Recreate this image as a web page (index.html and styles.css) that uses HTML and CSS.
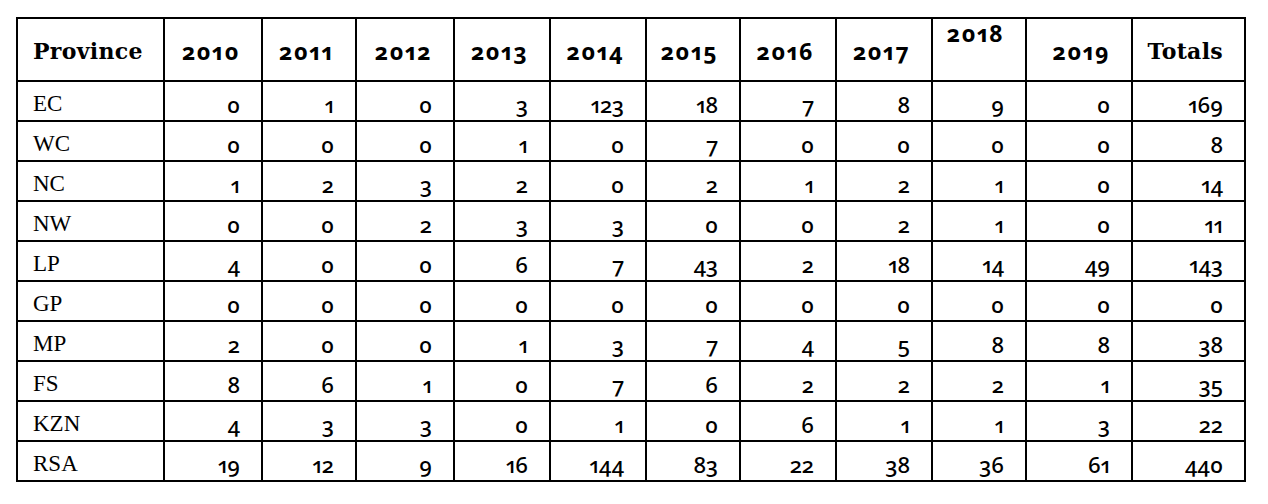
FILE: index.html
```html
<!DOCTYPE html>
<html lang="en">
<head>
    <meta charset="UTF-8">
    <title>Cases per Province 2010-2019</title>
    <link rel="stylesheet" href="styles.css">
</head>
<body>
    <table class="stats-table">
        <colgroup>
            <col class="col-province">
            <col class="col-year-a">
            <col class="col-year-b">
            <col class="col-year-a">
            <col class="col-year-c">
            <col class="col-year-c">
            <col class="col-year-b">
            <col class="col-year-c">
            <col class="col-year-c">
            <col class="col-year-b">
            <col class="col-year-d">
            <col class="col-totals">
        </colgroup>
        <thead>
            <tr>
                <th class="label-head">Province</th>
                <th>2010</th>
                <th>2011</th>
                <th>2012</th>
                <th>2013</th>
                <th>2014</th>
                <th>2015</th>
                <th>2016</th>
                <th>2017</th>
                <th class="raised">2018</th>
                <th>2019</th>
                <th class="label-head">Totals</th>
            </tr>
        </thead>
        <tbody>
            <tr><td class="province">EC</td><td>0</td><td>1</td><td>0</td><td>3</td><td>123</td><td>18</td><td>7</td><td>8</td><td>9</td><td>0</td><td>169</td></tr>
            <tr><td class="province">WC</td><td>0</td><td>0</td><td>0</td><td>1</td><td>0</td><td>7</td><td>0</td><td>0</td><td>0</td><td>0</td><td>8</td></tr>
            <tr><td class="province">NC</td><td>1</td><td>2</td><td>3</td><td>2</td><td>0</td><td>2</td><td>1</td><td>2</td><td>1</td><td>0</td><td>14</td></tr>
            <tr><td class="province">NW</td><td>0</td><td>0</td><td>2</td><td>3</td><td>3</td><td>0</td><td>0</td><td>2</td><td>1</td><td>0</td><td>11</td></tr>
            <tr><td class="province">LP</td><td>4</td><td>0</td><td>0</td><td>6</td><td>7</td><td>43</td><td>2</td><td>18</td><td>14</td><td>49</td><td>143</td></tr>
            <tr><td class="province">GP</td><td>0</td><td>0</td><td>0</td><td>0</td><td>0</td><td>0</td><td>0</td><td>0</td><td>0</td><td>0</td><td>0</td></tr>
            <tr><td class="province">MP</td><td>2</td><td>0</td><td>0</td><td>1</td><td>3</td><td>7</td><td>4</td><td>5</td><td>8</td><td>8</td><td>38</td></tr>
            <tr><td class="province">FS</td><td>8</td><td>6</td><td>1</td><td>0</td><td>7</td><td>6</td><td>2</td><td>2</td><td>2</td><td>1</td><td>35</td></tr>
            <tr><td class="province">KZN</td><td>4</td><td>3</td><td>3</td><td>0</td><td>1</td><td>0</td><td>6</td><td>1</td><td>1</td><td>3</td><td>22</td></tr>
            <tr><td class="province">RSA</td><td>19</td><td>12</td><td>9</td><td>16</td><td>144</td><td>83</td><td>22</td><td>38</td><td>36</td><td>61</td><td>440</td></tr>
        </tbody>
    </table>
</body>
</html>
```
FILE: styles.css
```css
body {
    margin: 0;
    background-color: #fff;
    color: #000;
}
.stats-table {
    margin: 17px 0 0 16px;
    width: 1230px;
    table-layout: fixed;
    border-collapse: collapse;
    border: 2px solid #000;
}
.col-province { width: 147px; }
.col-year-a { width: 98px; }
.col-year-b { width: 94px; }
.col-year-c { width: 96px; }
.col-year-d { width: 106px; }
.col-totals { width: 113px; }
.stats-table th,
.stats-table td {
    border: 2px solid #000;
    padding: 0 21px 0 0;
    text-align: right;
}
.stats-table thead tr {
    height: 63px;
}
.stats-table tbody tr {
    height: 40px;
}
.stats-table th {
    font-family: "Noto Sans", sans-serif;
    font-weight: 700;
    font-size: 23px;
    letter-spacing: 1.5px;
    font-variant-numeric: oldstyle-nums proportional-nums;
    vertical-align: middle;
    padding-top: 2px;
}
.stats-table th.label-head {
    font-family: "DejaVu Serif", serif;
    font-size: 22px;
    letter-spacing: 0.3px;
}
.stats-table th:first-child {
    text-align: left;
    padding-left: 15px;
}
.stats-table th.raised {
    vertical-align: top;
    padding-top: 0;
    line-height: 1.3;
}
.stats-table td {
    font-family: "Noto Sans", sans-serif;
    font-weight: 500;
    font-size: 22px;
    font-variant-numeric: oldstyle-nums proportional-nums;
    padding-top: 5px;
}
.stats-table td.province {
    font-family: "Liberation Serif", serif;
    font-weight: 400;
    font-size: 23px;
    text-align: left;
    padding-left: 15px;
    padding-top: 6px;
}
```
